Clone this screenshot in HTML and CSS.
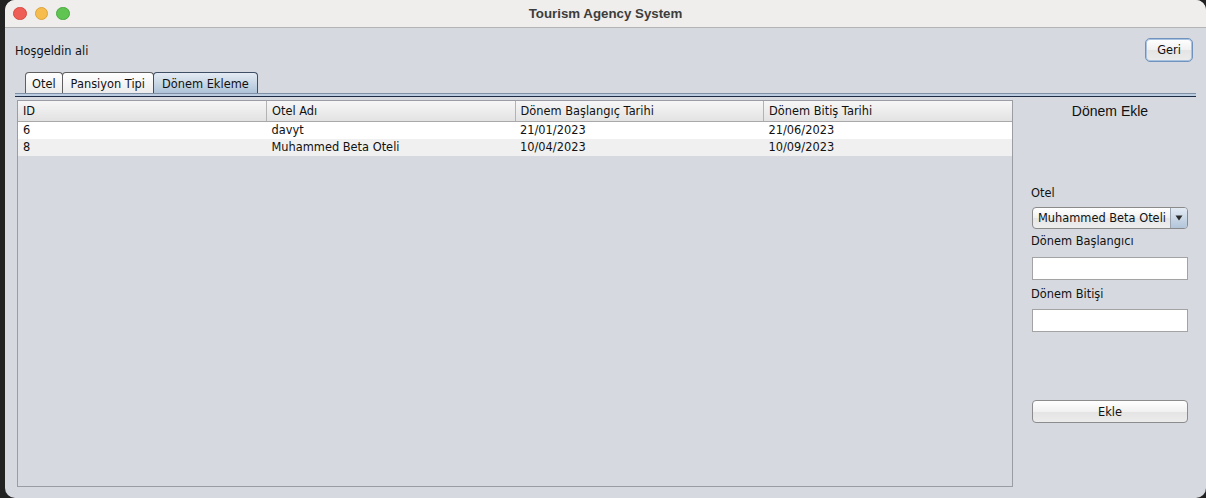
FILE: index.html
```html
<!DOCTYPE html>
<html lang="tr">
<head>
<meta charset="utf-8">
<title>Tourism Agency System</title>
<link rel="stylesheet" href="styles.css">
</head>
<body>
<div class="window">
  <div class="titlebar">
    <div class="lights">
      <span class="light red"></span>
      <span class="light yellow"></span>
      <span class="light green"></span>
    </div>
    <div class="title">Tourism Agency System</div>
  </div>
  <div class="content">
    <div class="topbar">
      <span class="greeting">Hoşgeldin ali</span>
      <button class="btn btn-default">Geri</button>
    </div>
    <div class="tabs">
      <div class="tab tab-narrow">Otel</div>
      <div class="tab">Pansiyon Tipi</div>
      <div class="tab active">Dönem Ekleme</div>
    </div>
    <div class="tabline"></div>
    <div class="main">
      <div class="tablebox">
        <table class="grid">
          <thead>
            <tr><th>ID</th><th>Otel Adı</th><th>Dönem Başlangıç Tarihi</th><th>Dönem Bitiş Tarihi</th></tr>
          </thead>
          <tbody>
            <tr class="odd"><td>6</td><td>davyt</td><td>21/01/2023</td><td>21/06/2023</td></tr>
            <tr class="even"><td>8</td><td>Muhammed Beta Oteli</td><td>10/04/2023</td><td>10/09/2023</td></tr>
          </tbody>
        </table>
      </div>
      <div class="side">
        <div class="side-title">Dönem Ekle</div>
        <label class="lbl lbl-otel">Otel</label>
        <div class="combo">
          <span class="combo-text">Muhammed Beta Oteli</span>
          <span class="combo-arrow">
            <svg width="8" height="6" viewBox="0 0 8 6"><path d="M0.5 0.5 L7.5 0.5 L4 5.5 Z" fill="#2b2b2b"/></svg>
          </span>
        </div>
        <label class="lbl lbl-start">Dönem Başlangıcı</label>
        <div class="field field-start"></div>
        <label class="lbl lbl-end">Dönem Bitişi</label>
        <div class="field field-end"></div>
        <button class="btn btn-wide">Ekle</button>
      </div>
    </div>
  </div>
</div>
</body>
</html>
```

FILE: styles.css
```css
html, body {
  margin: 0;
  padding: 0;
  background: #222222;
  width: 1206px;
  height: 498px;
  overflow: hidden;
}

.window {
  margin-left: 5px;
  width: 1201px;
  height: 498px;
  border-radius: 10px;
  overflow: hidden;
  background: #d6d9e0;
  display: flex;
  flex-direction: column;
  font-family: "DejaVu Sans", sans-serif;
  font-size: 11.4px;
  color: #111;
}

.titlebar {
  height: 27px;
  flex: none;
  background: #efeeec;
  border-bottom: 1px solid #b4b4b4;
  display: flex;
  align-items: center;
  position: relative;
}

.lights {
  display: flex;
  gap: 8px;
  padding-left: 8px;
}

.light {
  width: 11.5px;
  height: 11.5px;
  border-radius: 50%;
  display: block;
}
.light.red { background: #ee5e57; border: 0.5px solid #d44a43; }
.light.yellow { background: #f6bd4e; border: 0.5px solid #dba23c; }
.light.green { background: #5fc451; border: 0.5px solid #4aa93e; }

.title {
  position: absolute;
  left: 0;
  right: 0;
  top: 0;
  height: 27px;
  line-height: 27px;
  text-align: center;
  font-family: "Liberation Sans", Arial, sans-serif;
  font-weight: bold;
  font-size: 13.3px;
  color: #3d3d3d;
  pointer-events: none;
}

.content {
  flex: 1;
  display: flex;
  flex-direction: column;
  padding: 10px 10px 11px 10px;
  min-height: 0;
}

.topbar {
  display: flex;
  justify-content: space-between;
  align-items: center;
  height: 24px;
}

.greeting {
  font-size: 11.4px;
  color: #111;
  position: relative;
  top: 1px;
}

.btn {
  font-family: "DejaVu Sans", sans-serif;
  font-size: 11.4px;
  color: #111;
  background: linear-gradient(#ffffff, #f1f1f1 50%, #e4e4e4 51%, #ececec);
  border: 1px solid #8c8c8c;
  border-radius: 5px;
  padding: 0;
  margin: 0;
  cursor: default;
}

.btn-default {
  width: 48px;
  height: 24px;
  margin-right: 3px;
  border: 1px solid #6f93bd;
  box-shadow: inset 0 0 0 1px #a9c2e0;
}

.tabs {
  display: flex;
  margin-top: 10px;
  padding-left: 10px;
  height: 21px;
}

.tab {
  height: 21px;
  box-sizing: border-box;
  border: 1px solid #5f5f5f;
  border-bottom: none;
  border-radius: 4px 4px 0 0;
  padding: 0 8px;
  line-height: 22px;
  background: linear-gradient(#ffffff, #ececec);
  color: #111;
  margin-right: -1px;
}

.tab-narrow {
  padding: 0 6px;
}

.tab.active {
  background: linear-gradient(#e4ebf3, #aec3d9);
  border-color: #3f4f66;
}

.tabline {
  height: 4px;
  box-sizing: border-box;
  border-top: 1px solid #7f8fa4;
  border-bottom: 1px solid #1d2b45;
  background: #bccde1;
}

.main {
  flex: 1;
  display: flex;
  min-height: 0;
  margin-top: 3px;
}

.tablebox {
  margin-left: 2px;
  width: 996px;
  box-sizing: border-box;
  border: 1px solid #9a9da4;
  background: #d6d9e0;
  overflow: hidden;
}

.grid {
  width: 100%;
  border-collapse: collapse;
  table-layout: fixed;
}

.grid th {
  height: 20px;
  box-sizing: border-box;
  text-align: left;
  font-weight: normal;
  padding: 0 0 0 5px;
  background: linear-gradient(#f6f6f6, #e2e2e2);
  border-right: 1px solid #b3b3b3;
  border-bottom: 1px solid #a9a9a9;
  color: #111;
}

.grid th:last-child {
  border-right: none;
}

.grid td {
  height: 17px;
  padding: 0 0 0 5px;
  white-space: nowrap;
  line-height: 16px;
  color: #111;
}

.grid tr.odd td { background: #ffffff; }
.grid tr.even td { background: #f0f0f0; }

.side {
  flex: 1;
  display: flex;
  flex-direction: column;
  padding-left: 19px;
  padding-right: 8px;
}

.side-title {
  font-family: "Liberation Sans", Arial, sans-serif;
  font-size: 14px;
  color: #111;
  text-align: center;
  margin-top: 3px;
  height: 16px;
  line-height: 16px;
}

.lbl {
  display: block;
  height: 14px;
  line-height: 14px;
  color: #111;
  margin-left: -1px;
}

.lbl-otel { margin-top: 67px; }
.lbl-start { margin-top: 5px; }
.lbl-end { margin-top: 7px; }

.combo {
  margin-top: 7px;
  height: 22px;
  box-sizing: border-box;
  border: 1px solid #8a8a8a;
  border-radius: 4px;
  background: linear-gradient(#ffffff, #f0f0f0 50%, #e6e6e6 51%, #eeeeee);
  display: flex;
  align-items: center;
  overflow: hidden;
}

.combo-text {
  flex: 1;
  padding-left: 5px;
  white-space: nowrap;
  color: #111;
}

.combo-arrow {
  width: 16px;
  height: 100%;
  border-left: 1px solid #9aa4b0;
  background: linear-gradient(#e3ebf4, #b2c5da);
  display: flex;
  align-items: center;
  justify-content: center;
}

.field {
  margin-top: 9px;
  height: 23px;
  box-sizing: border-box;
  border: 1px solid #a3a3a3;
  background: #ffffff;
}

.field-end {
  margin-top: 8px;
}

.btn-wide {
  margin-top: 68px;
  height: 23px;
  width: 100%;
  border-radius: 4px;
}
```
